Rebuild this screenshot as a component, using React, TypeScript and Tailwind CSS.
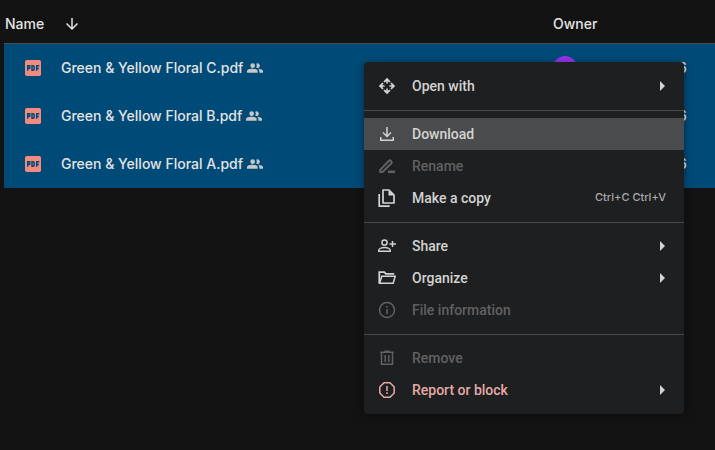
import React from 'react';

const FILES = [
  { id: 1, name: 'Green & Yellow Floral C.pdf', day: '6' },
  { id: 2, name: 'Green & Yellow Floral B.pdf', day: '6' },
  { id: 3, name: 'Green & Yellow Floral A.pdf', day: '6' },
];

type IconProps = { children: React.ReactNode };

const Icon: React.FC<IconProps> = ({ children }) => (
  <svg
    viewBox="0 0 20 20"
    className="w-5 h-5 shrink-0"
    fill="none"
    stroke="currentColor"
    strokeWidth="1.5"
    aria-hidden="true"
  >
    {children}
  </svg>
);

const OpenWithIcon = () => (
  <Icon>
    <path
      d="M10 1.8 13.6 5.4 12.4 6.6 10.8 5.2V7.6H9.2V5.2L7.6 6.6 6.4 5.4zM10 18.2 13.6 14.6 12.4 13.4 10.8 14.8V12.4H9.2V14.8L7.6 13.4 6.4 14.6zM1.8 10 5.4 6.4 6.6 7.6 5.2 9.2H7.6V10.8H5.2L6.6 12.4 5.4 13.6zM18.2 10 14.6 6.4 13.4 7.6 14.8 9.2H12.4V10.8H14.8L13.4 12.4 14.6 13.6z"
      fill="currentColor"
      stroke="none"
    />
  </Icon>
);

const DownloadIcon = () => (
  <Icon>
    <path d="M10 3v9M6 8.5l4 4 4-4M3.75 13v3.25h12.5V13" />
  </Icon>
);

const RenameIcon = () => (
  <Icon>
    <path
      d="M3.2 16v-2.2l8.7-9a1.3 1.3 0 0 1 1.8 0l.7.7a1.3 1.3 0 0 1 0 1.8L5.6 16z"
      strokeWidth="2"
    />
    <path d="M11 15.8h7" strokeWidth="2.5" />
  </Icon>
);

const CopyIcon = () => (
  <Icon>
    <path d="M6 2h6l5 5v8H6z" strokeLinejoin="round" strokeWidth="1.7" />
    <path d="M11.5 2v5.5H17z" fill="currentColor" stroke="none" />
    <path d="M2.2 6v12.2h10.5" strokeLinejoin="round" strokeWidth="1.7" />
  </Icon>
);

const ShareIcon = () => (
  <Icon>
    <circle cx="7.5" cy="6.5" r="2.6" />
    <path d="M1.8 15.3v-1.1c0-1.9 3.6-2.7 5.7-2.7s5.7.8 5.7 2.7v1.1z" />
    <path d="M15.5 5v6M12.5 8h6.5" />
  </Icon>
);

const OrganizeIcon = () => (
  <Icon>
    <path d="M2.3 15.2V4.2h5l1.6 1.6h8.3" strokeWidth="1.8" />
    <path d="M2.6 15.3 4.8 8.3h13.4l-2 7z" />
  </Icon>
);

const InfoIcon = () => (
  <Icon>
    <circle cx="10" cy="10" r="7.5" />
    <path d="M10 9v5M10 6v1.7" />
  </Icon>
);

const RemoveIcon = () => (
  <Icon>
    <path d="M4.5 5v11.3h11V5M3.3 4.2h13.4M7.5 3.2h5M8.2 7v7M11.8 7v7" />
  </Icon>
);

const ReportIcon = () => (
  <Icon>
    <path d="M7 2.8h6L17.2 7v6L13 17.2H7L2.8 13V7z" />
    <path d="M10 6v5M10 12.3V14" />
  </Icon>
);

const PdfIcon = () => (
  <svg viewBox="0 0 16 16" className="w-4 h-4 shrink-0" aria-hidden="true">
    <rect width="16" height="16" rx="1.8" fill="#f28b82" />
    <g fill="none" stroke="#004a77" strokeWidth="1.5">
      <path d="M2.7 10.8V5.8h2v2.4h-2" />
      <path d="M7 5.8v4.4h1.2l1-.9V6.7l-1-.9z" />
      <path d="M11.7 10.8V5.8h2.6M11.7 8.4h2.2" />
    </g>
  </svg>
);

const SharedIcon = () => (
  <svg viewBox="0 0 24 24" className="w-4 h-4 shrink-0" fill="#c7c7c7" role="img" aria-label="Shared">
    <circle cx="8.5" cy="8.5" r="3.5" />
    <path d="M0 19v-2.5C0 14 4.5 13 8 13s8 1 8 3.5V19z" />
    <path d="M13.8 11.4a5 5 0 0 0 0-5.8 3.5 3.5 0 1 1 0 5.8zM16.5 13.2c3.5.2 7.5 1.2 7.5 3.3V19h-5.5v-2.5c0-1.4-.8-2.5-2-3.3z" />
  </svg>
);

interface MenuItem {
  label: string;
  icon: React.FC;
  shortcut?: string;
  submenu?: boolean;
  active?: boolean;
  disabled?: boolean;
  danger?: boolean;
}

const MENU: MenuItem[][] = [
  [{ label: 'Open with', icon: OpenWithIcon, submenu: true }],
  [
    { label: 'Download', icon: DownloadIcon, active: true },
    { label: 'Rename', icon: RenameIcon, disabled: true },
    { label: 'Make a copy', icon: CopyIcon, shortcut: 'Ctrl+C Ctrl+V' },
  ],
  [
    { label: 'Share', icon: ShareIcon, submenu: true },
    { label: 'Organize', icon: OrganizeIcon, submenu: true },
    { label: 'File information', icon: InfoIcon, disabled: true },
  ],
  [
    { label: 'Remove', icon: RemoveIcon, disabled: true },
    { label: 'Report or block', icon: ReportIcon, submenu: true, danger: true },
  ],
];

const itemColor = (item: MenuItem) => {
  if (item.disabled) return 'text-[#606162]';
  if (item.danger) return 'text-[#e6aaa6]';
  return 'text-[#d2d3d2]';
};

const ContextMenu: React.FC = () => (
  <div
    role="menu"
    className="absolute top-[62px] right-[31px] w-80 py-2 rounded bg-[#1e1f20] font-['Roboto',sans-serif] shadow-[0_2px_8px_rgba(0,0,0,0.4)]"
  >
    {MENU.map((group, i) => (
      <div key={i}>
        {i > 0 && (
          <div role="separator" className="h-4 pt-2">
            <div className="border-t border-[#48494a]" />
          </div>
        )}
        {group.map((item) => (
          <button
            key={item.label}
            role="menuitem"
            disabled={item.disabled}
            className={`flex items-center w-full h-8 pl-[13px] pr-[18px] text-left ${itemColor(item)} ${
              item.active ? 'bg-[#4a4b4c]' : ''
            }`}
          >
            <item.icon />
            <span className="flex-1 ml-[15px]">{item.label}</span>
            {item.shortcut && (
              <span className="font-['Inter',sans-serif] text-[11px] text-[#a9aaaa]">{item.shortcut}</span>
            )}
            {item.submenu && (
              <svg viewBox="0 0 6 10" className="w-[6px] h-[10px]" fill="#d2d3d2" aria-hidden="true">
                <path d="M0 0l5 5-5 5z" />
              </svg>
            )}
          </button>
        ))}
      </div>
    ))}
  </div>
);

const App: React.FC = () => {
  return (
    <div className="relative min-h-screen pl-1 bg-[#131313] font-['Inter',sans-serif] text-sm font-medium text-[#e3e3e3]">
      <table className="w-full table-fixed border-separate border-spacing-0 text-left">
        <thead>
          <tr className="h-11">
            <th className="p-0 pl-px pt-1 border-b border-[#4b4c4d] font-medium">
              <div className="flex items-center">
                Name
                <button aria-label="Reverse sort direction" className="ml-[18px]">
                  <Icon>
                    <path d="M10 4v11M4.5 9.5l5.5 5.5 5.5-5.5" />
                  </Icon>
                </button>
              </div>
            </th>
            <th className="w-[125px] p-0 pt-1 border-b border-[#4b4c4d] font-medium">Owner</th>
            <th className="w-[37px] p-0 border-b border-[#4b4c4d]" aria-label="Date modified" />
          </tr>
        </thead>
        <tbody>
          {FILES.map((file) => (
            <tr key={file.id} className="h-12 bg-[#004a77]">
              <td className="p-0 pl-[21px]">
                <div className="flex items-center">
                  <PdfIcon />
                  <span className="ml-5 mr-1">{file.name}</span>
                  <SharedIcon />
                </div>
              </td>
              <td className="p-0">
                <div className="w-6 h-6 rounded-full bg-[#9334e6]" />
              </td>
              <td className="p-0">{file.day}</td>
            </tr>
          ))}
        </tbody>
      </table>
      <ContextMenu />
    </div>
  );
};

export default App;
